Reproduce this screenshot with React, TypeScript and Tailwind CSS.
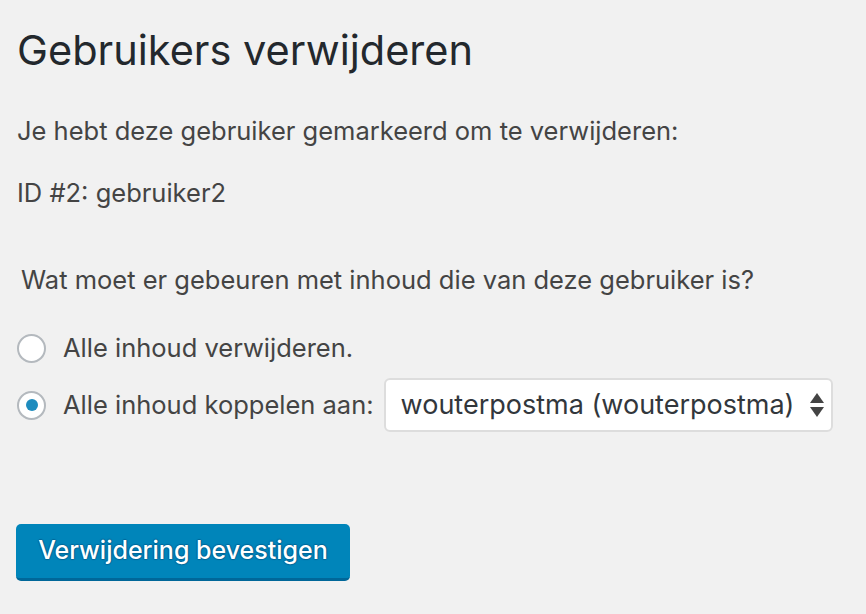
export default function App() {
  return (
    <div
      className="min-h-[614px] w-[866px] bg-[#f1f1f1] text-[#444] pl-[17px] pt-[22px]"
      style={{ fontFamily: 'Inter, "Liberation Sans", Arial, sans-serif' }}
    >
      <h1 className="text-[41.5px] leading-[56px] text-[#23282d] font-normal">Gebruikers verwijderen</h1>

      <p className="mt-[38px] text-[25.5px] leading-[30px]">Je hebt deze gebruiker gemarkeerd om te verwijderen:</p>

      <p className="mt-[32px] text-[25.5px] leading-[30px]">ID #2: gebruiker2</p>

      <fieldset className="mt-[57px]">
        <p className="ml-[4px] text-[25.5px] leading-[30px]">Wat moet er gebeuren met inhoud die van deze gebruiker is?</p>

        <div className="mt-[27px] flex flex-col gap-[4px]">
          <label className="flex items-center h-[52px]">
            <span className="w-[29px] h-[29px] rounded-full border-2 border-[#b4b9be] bg-white" />
            <span className="ml-[17px] text-[25.5px]">Alle inhoud verwijderen.</span>
          </label>

          <label className="flex items-center h-[54px]">
            <span className="w-[29px] h-[29px] rounded-full border-2 border-[#b4b9be] bg-white flex items-center justify-center">
              <span className="w-[12px] h-[12px] rounded-full bg-[#1e8cbe]" />
            </span>
            <span className="ml-[17px] text-[25.5px]">Alle inhoud koppelen aan:</span>
            <div className="ml-[10px] w-[449px] h-[54px] rounded-[6px] border-2 border-[#ddd] bg-white flex items-center justify-between pl-[15px] pr-[6px] text-[#32373c]">
              <span className="text-[27px]">wouterpostma (wouterpostma)</span>
              <svg width="16" height="28" viewBox="0 0 16 28" className="text-[#444]">
                <path d="M8 2 L15 12 H1 Z" fill="currentColor" />
                <path d="M8 26 L15 16 H1 Z" fill="currentColor" />
              </svg>
            </div>
          </label>
        </div>
      </fieldset>

      <button className="-ml-px mt-[92px] w-[334px] h-[57px] rounded-[5px] bg-[#0085ba] border-b-[3px] border-[#006799] text-white text-[25px] font-medium [text-shadow:0_-1px_1px_#006799,1px_0_1px_#006799,0_1px_1px_#006799,-1px_0_1px_#006799]">
        Verwijdering bevestigen
      </button>
    </div>
  );
}
